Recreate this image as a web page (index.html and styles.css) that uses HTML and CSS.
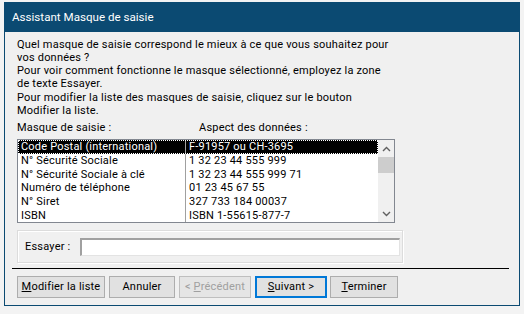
FILE: index.html
```html
<!DOCTYPE html>
<html lang="fr">
<head>
	<meta charset="UTF-8">
	<title>Assistant Masque de saisie</title>
	<link rel="stylesheet" href="styles.css">
</head>
<body>
	<div class="window">
		<div class="titlebar">Assistant Masque de saisie</div>
		<div class="content">
			<p class="intro">Quel masque de saisie correspond le mieux à ce que vous souhaitez pour<br>vos données ?<br>Pour voir comment fonctionne le masque sélectionné, employez la zone<br>de texte Essayer.</p>
			<p class="intro second">Pour modifier la liste des masques de saisie, cliquez sur le bouton<br>Modifier la liste.</p>
			<div class="heads">
				<span class="h1">Masque de saisie :</span>
				<span class="h2">Aspect des données :</span>
			</div>
			<div class="listbox">
				<div class="rows">
					<div class="row selected"><span class="c1">Code Postal (international)</span><span class="c2">F-91957 ou CH-3695</span></div>
					<div class="row"><span class="c1">N° Sécurité Sociale</span><span class="c2">1 32 23 44 555 999</span></div>
					<div class="row"><span class="c1">N° Sécurité Sociale à clé</span><span class="c2">1 32 23 44 555 999 71</span></div>
					<div class="row"><span class="c1">Numéro de téléphone</span><span class="c2">01 23 45 67 55</span></div>
					<div class="row"><span class="c1">N° Siret</span><span class="c2">327 733 184 00037</span></div>
					<div class="row"><span class="c1">ISBN</span><span class="c2">ISBN 1-55615-877-7</span></div>
				</div>
				<div class="scrollbar">
					<div class="arrow">
						<svg width="9" height="6" viewBox="0 0 9 6"><path d="M1 5 L4.5 1.5 L8 5" fill="none" stroke="#606060" stroke-width="1.4"/></svg>
					</div>
					<div class="track"><div class="thumb"></div></div>
					<div class="arrow">
						<svg width="9" height="6" viewBox="0 0 9 6"><path d="M1 1 L4.5 4.5 L8 1" fill="none" stroke="#606060" stroke-width="1.4"/></svg>
					</div>
				</div>
			</div>
			<div class="tryit">
				<span class="trylabel">Essayer :</span>
				<div class="tryinput"></div>
			</div>
			<div class="sep"></div>
			<div class="buttons">
				<div class="btn wide"><u>M</u>odifier la liste</div>
				<div class="btn cancel">Annuler</div>
				<div class="btn disabled">&lt; <u>P</u>récédent</div>
				<div class="btn default"><u>S</u>uivant &gt;</div>
				<div class="btn finish"><u>T</u>erminer</div>
			</div>
		</div>
	</div>
</body>
</html>
```

FILE: styles.css
```css
*{padding:0;margin:0;box-sizing:border-box;}
body{
	background:#f3f3f3;
	font-family:Roboto,"Noto Sans","Liberation Sans",sans-serif;
	font-size:11px;
	letter-spacing:0.2px;
	color:#000;
}
.window{
	width:516px;
	height:304px;
	margin:2px 0 0 4px;
	background:#f0f0f0;
	border:1px solid #0b4a72;
	border-top:none;
	display:flex;
	flex-direction:column;
}
.titlebar{
	height:30px;
	background:#0b4a72;
	color:#fff;
	font-size:11.6px;
	letter-spacing:0;
	line-height:30px;
	padding-left:8px;
	margin:0 -1px;
}
.content{
	padding:6px 0 0 12px;
	display:flex;
	flex-direction:column;
}
.intro{
	line-height:13px;
	white-space:nowrap;
}
.intro.second{
	margin-top:1px;
}
.heads{
	display:flex;
	line-height:13px;
	margin-top:4px;
}
.h1{width:182px;}
.listbox{
	margin-top:5px;
	width:378px;
	height:84px;
	border:1px solid #828790;
	background:#fff;
	display:flex;
	overflow:hidden;
}
.rows{
	flex:1;
	overflow:hidden;
}
.row{
	display:flex;
	height:13.8px;
	line-height:14px;
	white-space:nowrap;
}
.c1{
	width:167px;
	padding-left:3px;
}
.c2{
	flex:1;
	padding-left:3px;
	border-left:1px solid #a0a0a0;
}
.row.selected{
	background:#000;
	color:#fff;
	outline:1px dotted #fff;
	outline-offset:-1px;
}
.scrollbar{
	width:16px;
	background:#f0f0f0;
	display:flex;
	flex-direction:column;
}
.arrow{
	height:17px;
	display:flex;
	align-items:center;
	justify-content:center;
}
.track{flex:1;}
.thumb{
	height:16px;
	background:#cdcdcd;
}
.tryit{
	margin-top:7px;
	width:386px;
	height:33px;
	border:1px solid #dcdcdc;
	box-shadow:inset 1px 1px 0 #fff, 1px 1px 0 #fff;
	display:flex;
	align-items:center;
	padding-left:7px;
}
.trylabel{
	width:55px;
}
.tryinput{
	width:320px;
	height:18px;
	background:#fff;
	border-top:2px solid #a0a0a0;
	border-left:2px solid #a0a0a0;
	border-right:1px solid #e3e3e3;
	border-bottom:1px solid #e3e3e3;
}
.sep{
	margin:5px 0 0 -5px;
	width:497px;
	height:1px;
	background:#000;
}
.buttons{
	margin-top:7px;
	display:flex;
	gap:4px;
}
.btn{
	width:66px;
	height:22px;
	line-height:20px;
	text-align:center;
	background:#e1e1e1;
	border:1px solid #adadad;
	white-space:nowrap;
}
.btn.wide{width:88px;}
.btn.default{
	width:72px;
	border:2px solid #0078d7;
	line-height:18px;
}
.btn.finish{
	width:68px;
	margin-left:-1px;
}
.btn.disabled{
	width:72px;
	color:#a0a0a0;
	border-color:#bfbfbf;
	background:#e5e5e5;
}
.btn u{text-underline-offset:1px;}
```
